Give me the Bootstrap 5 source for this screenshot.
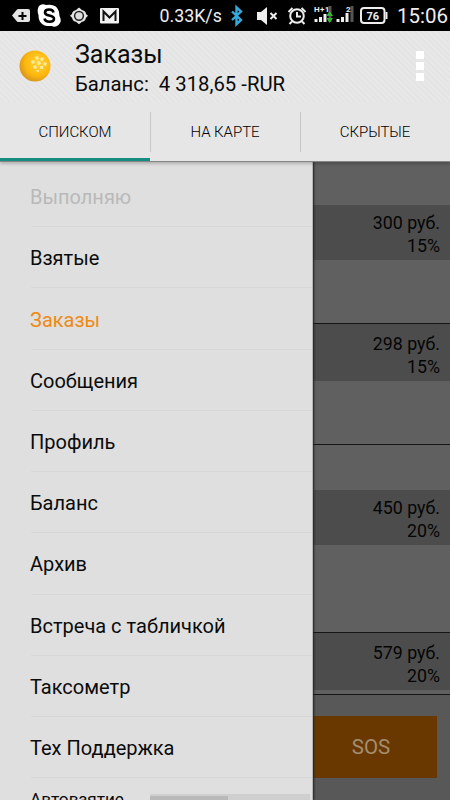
<!DOCTYPE html>
<html lang="ru">
<head>
<meta charset="utf-8">
<meta name="viewport" content="width=device-width, initial-scale=1">
<title>Заказы</title>
<link href="https://cdn.jsdelivr.net/npm/bootstrap@5.3.0/dist/css/bootstrap.min.css" rel="stylesheet">
<style>
body{font-family:Roboto,"Liberation Sans",sans-serif;color:#0b0b0b;background:#606060;line-height:1}
.phone{width:450px;height:800px}
.status{height:31px;background:#000;color:#eee}
.status svg,.ball,.dots{display:block;flex:none}
.speed{width:70px;padding-left:9.500px;font-size:17.800px;padding-top:1px}
.clock{font-size:20.500px;padding-left:7px;padding-top:2px}
.appbar{height:131px;background:#e6e6e6;border-bottom:1px solid #858585;box-shadow:0 2px 3px rgba(0,0,0,.2);z-index:2}
.titlebar{height:71px;background:repeating-linear-gradient(45deg,#e8e8e8 0 2px,#e4e4e4 2px 4px)}
.ball{margin:18px 0 0 18px}
.heads{margin-left:23px;padding-top:11px}
.heads h1{font-size:25px;line-height:26px;font-weight:400;margin:0}
.balance{font-size:20.300px;line-height:24px;margin-top:4px;white-space:pre}
.dots{margin:20px 26px 0 auto}
.tabs{height:59px}
.tab-item{width:150px;font-size:15px;font-weight:300;color:#000;padding-top:4px;border-bottom:3px solid transparent;position:relative}
.tab-item.active{border-bottom-color:#178c80}
.tab-item + .tab-item::before{content:"";position:absolute;left:0;top:10px;width:1px;height:40px;background:#c6c6c6}
.tab-item span{letter-spacing:-.05px}
.drawer{width:313px;padding-top:4px;background:#dfdfdf;border-right:1px solid #b4b4b4;box-shadow:1px 0 2px #222;z-index:1}
.menu-item{height:61.220px;margin-left:31px;border-bottom:1px solid #d7d7d7;font-size:20px;padding-top:2px}
.menu-item span{margin-left:-1px}
.off{color:#b9b9b9}
.chosen{color:#ee8a13}
.auto-row{height:70px;margin-left:30px;font-size:17.200px;padding-top:13px}
.switch-track{width:160px;height:30px;background:#cfcfcf;margin-right:2px;margin-top:3px}
.switch-thumb{width:78px;background:#b9b9b9;margin-top:2px}
.orders{background:#606060}
.top-space{height:43px}
.mid-space{height:45px}
.price{background:#4c4c4c;font-size:17.800px;line-height:23.500px;padding:5.500px 10px 0 0;height:55px;color:#050505}
.price.lined{padding-top:7.500px;height:57px}
.gap-row{height:64px;border-bottom:1px solid #151515}
.gap-row.tall{height:88px}
.gap-row.thin{height:5px}
.foot{background:#585858;padding-top:21px}
.sos{width:124px;height:62px;padding-right:8px;background:#683800;color:#a48d70;font-size:20.500px}
</style>
<script src="https://cdn.jsdelivr.net/npm/bootstrap@5.3.0/dist/js/bootstrap.bundle.min.js"></script>
</head>
<body>
<div class="phone d-flex flex-column overflow-hidden">
  <div class="status d-flex align-items-center flex-shrink-0">
    <svg width="150" height="31" viewBox="0 0 150 31">
      <path d="M12 15.500l5-6q.5-.5 1.500-.5H28q2 0 2 2v9q0 2-2 2h-9.500q-1 0-1.500-.5z" fill="#e4e4e4"/>
      <path d="M22.500 12v8M18.500 16h8" stroke="#000" stroke-width="2"/>
      <path d="M39 6q3-3 7-1 13-2 13.500 11 3 5-1 9-3 3-7 1-13 1-13-11-2-5 .5-9z" fill="#fff"/>
      <path d="M53.500 12.500q-.5-3-4.300-3-4.200 0-4.200 2.900 0 2.200 4.300 3.100 4.700 1 4.700 3.300 0 2.900-4.400 2.900-4.600 0-5-3.200" fill="none" stroke="#000" stroke-width="2.600"/>
      <path d="M79 7.500l3 2.500q4 1 4 4l2 1.800-2 2q-1 4-4 4l-3 2.500-3-2.500q-3 0-4-4l-2-2 2-1.800q0-3 4-4z" fill="#e4e4e4"/>
      <circle cx="79" cy="15.800" r="4.400" fill="#ddd" stroke="#222" stroke-width="1.500"/>
      <rect x="100" y="8" width="19" height="15.500" rx="1" fill="#f2f2f2"/>
      <path d="M103.500 21V11.500l6 6 6-6V21" fill="none" stroke="#111" stroke-width="2"/>
    </svg>
    <div class="speed text-nowrap">0.33K/s</div>
    <svg width="170" height="31" viewBox="220 0 170 31">
      <path d="M232 11.500l9 8.500-4.500 4.200V7.300l4.500 4.200-9 8.500" fill="none" stroke="#35a9dc" stroke-width="2.400"/>
      <path d="M257 12h4l6-5v18l-6-5h-4z" fill="#eee"/>
      <path d="M270.500 13l6 6M276.500 13l-6 6" stroke="#eee" stroke-width="2"/>
      <circle cx="297" cy="16" r="6.800" fill="none" stroke="#eee" stroke-width="2"/>
      <path d="M297 12v4.500h4M288.500 12l4-4M305.500 12l-4-4M292 21.500l-2.500 2.500M302 21.500l2.500 2.500" fill="none" stroke="#eee" stroke-width="2"/>
      <path d="M316 22v-3M320.500 22v-5M325 22v-8" stroke="#eee" stroke-width="3"/>
      <path d="M330 6v16" stroke="#555" stroke-width="3"/>
      <path d="M329.700 11l3.300 5h-6.600zM329.700 23l3.300-5h-6.600z" fill="#31b831"/>
      <text x="314" y="11.500" font-size="8" font-weight="700" fill="#eee" letter-spacing=".4">H+1</text>
      <path d="M338 22v-3M342.500 22v-5M347 22v-9" stroke="#eee" stroke-width="3"/>
      <path d="M352 6v16" stroke="#555" stroke-width="3"/>
      <text x="346" y="11.500" font-size="8" font-weight="700" fill="#eee">2</text>
      <rect x="361" y="8" width="23.500" height="15" rx="3" fill="none" stroke="#eee" stroke-width="2"/>
      <path d="M386.500 12v7" stroke="#eee" stroke-width="2"/>
      <text x="372.700" y="19.600" text-anchor="middle" font-size="11" font-weight="700" fill="#eee">76</text>
    </svg>
    <div class="clock">15:06</div>
  </div>

  <header class="appbar flex-shrink-0 position-relative">
    <div class="titlebar d-flex align-items-start">
      <svg class="ball" width="34" height="34" viewBox="0 0 34 34">
        <defs>
          <radialGradient id="gold" cx=".6" cy=".4" r=".6"><stop offset="0" stop-color="#ffd43a"/><stop offset=".7" stop-color="#fdb70d"/><stop offset="1" stop-color="#dd9a1c"/></radialGradient>
        </defs>
        <circle cx="17" cy="17" r="15.500" fill="url(#gold)"/>
        <g fill="#ffefa6" opacity=".85">
          <path d="M17 8l3-1 1 3-3 1zM23 8l3 1-1 3-3-1zM13 12l3-1 1 3-3 1zM19 12l3 0 1 3-3 1zM26 13l3 1-1 3-3-1zM15 17l3-1 1 3-3 1zM22 17l3 0 0 3-3 0zM18 21l3 0 0 2-2 0z"/>
        </g>
      </svg>
      <div class="heads">
        <h1>Заказы</h1>
        <div class="balance">Баланс:  4 318,65 -RUR</div>
      </div>
      <svg class="dots" width="8" height="31" viewBox="0 0 8 31" fill="#fff"><path d="M0 0h8v8H0zM0 11h8v8H0zM0 22h8v8H0z"/></svg>
    </div>
    <nav class="tabs d-flex">
      <div class="tab-item active d-flex align-items-center justify-content-center"><span>СПИСКОМ</span></div>
      <div class="tab-item d-flex align-items-center justify-content-center"><span>НА КАРТЕ</span></div>
      <div class="tab-item d-flex align-items-center justify-content-center"><span>СКРЫТЫЕ</span></div>
    </nav>
  </header>

  <main class="d-flex flex-grow-1 overflow-hidden">
    <aside class="drawer flex-shrink-0 position-relative">
      <div class="menu-item d-flex align-items-center off"><span>Выполняю</span></div>
      <div class="menu-item d-flex align-items-center"><span>Взятые</span></div>
      <div class="menu-item d-flex align-items-center chosen"><span>Заказы</span></div>
      <div class="menu-item d-flex align-items-center"><span>Сообщения</span></div>
      <div class="menu-item d-flex align-items-center"><span>Профиль</span></div>
      <div class="menu-item d-flex align-items-center"><span>Баланс</span></div>
      <div class="menu-item d-flex align-items-center"><span>Архив</span></div>
      <div class="menu-item d-flex align-items-center"><span>Встреча с табличкой</span></div>
      <div class="menu-item d-flex align-items-center"><span>Таксометр</span></div>
      <div class="menu-item d-flex align-items-center"><span>Тех Поддержка</span></div>
      <div class="auto-row d-flex justify-content-between align-items-start">
        <span>Автовзятие</span>
        <div class="switch-track d-flex"><div class="switch-thumb"></div></div>
      </div>
    </aside>
    <section class="orders flex-grow-1 d-flex flex-column">
      <div class="top-space"></div>
      <div class="price text-end">300 руб.<br>15%</div>
      <div class="gap-row"></div>
      <div class="price lined text-end">298 руб.<br>15%</div>
      <div class="gap-row"></div>
      <div class="mid-space"></div>
      <div class="price text-end">450 руб.<br>20%</div>
      <div class="gap-row tall"></div>
      <div class="price lined text-end">579 руб.<br>20%</div>
      <div class="gap-row thin"></div>
      <div class="foot flex-grow-1"><div class="sos d-flex align-items-center justify-content-center">SOS</div></div>
    </section>
  </main>
</div>
</body>
</html>
